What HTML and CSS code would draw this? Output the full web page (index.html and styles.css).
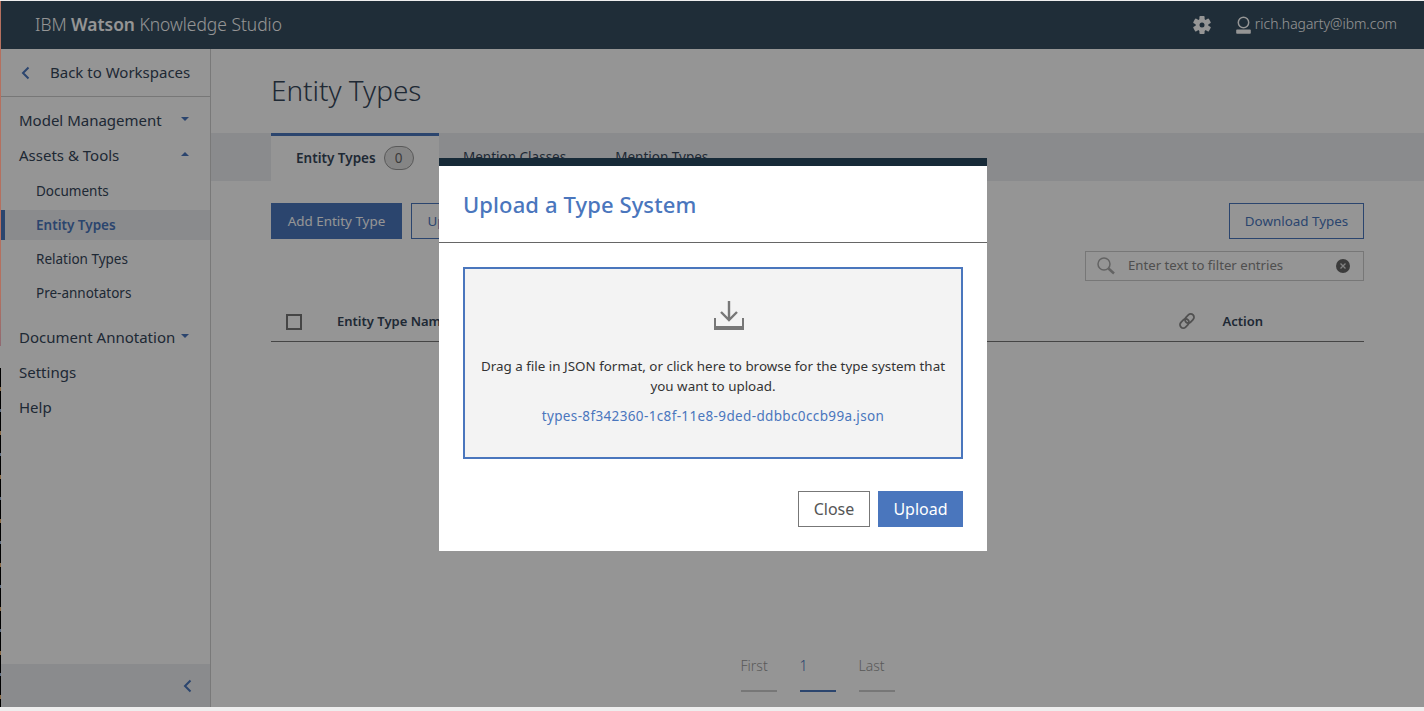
FILE: index.html
```html
<!DOCTYPE html>
<html lang="en">
<head>
    <meta charset="UTF-8">
    <title>Entity Types - IBM Watson Knowledge Studio</title>
    <link rel="stylesheet" href="styles.css">
</head>
<body>
    <div class="edge"></div>
    <div class="edge-noise"></div>
    <div class="app">
        <header class="topbar">
            <div class="brand">IBM <b>Watson</b> Knowledge Studio</div>
            <div class="topbar-right">
                <svg class="gear" width="18" height="18" viewBox="0 0 18 18"><g fill="#fff"><circle cx="9" cy="9" r="6.300"/><rect x="6.400" y="0" width="5.200" height="18" rx="1"/><rect x="6.400" y="0" width="5.200" height="18" rx="1" transform="rotate(60 9 9)"/><rect x="6.400" y="0" width="5.200" height="18" rx="1" transform="rotate(120 9 9)"/></g><circle cx="9" cy="9" r="2.500" fill="#354d60"/></svg>
                <svg class="user" width="15" height="18" viewBox="0 0 15 18"><circle cx="7.500" cy="6.500" r="5.200" fill="none" stroke="#fff" stroke-width="1.500"/><path fill="#fff" d="M1 13.500h13a.8.8 0 0 1 .8.8V17a.8.8 0 0 1-.8.8H1a.8.8 0 0 1-.8-.8v-2.700a.8.8 0 0 1 .8-.8z"/></svg>
                <span class="email">rich.hagarty@ibm.com</span>
            </div>
        </header>
        <div class="body-row">
            <nav class="sidebar">
                <a class="back"><svg width="9" height="14" viewBox="0 0 9 14"><path d="M7.500 1.500 2 7l5.500 5.500" fill="none" stroke="#4a76bd" stroke-width="2"/></svg><span>Back to Workspaces</span></a>
                <div class="nav-list">
                    <div class="nav-head">Model Management <i class="caret down"></i></div>
                    <div class="nav-head">Assets &amp; Tools <i class="caret up"></i></div>
                    <div class="nav-sub first">Documents</div>
                    <div class="nav-sub active">Entity Types</div>
                    <div class="nav-sub">Relation Types</div>
                    <div class="nav-sub">Pre-annotators</div>
                    <div class="nav-head spaced">Document Annotation <i class="caret down"></i></div>
                    <div class="nav-head">Settings</div>
                    <div class="nav-head">Help</div>
                </div>
                <div class="collapse"><svg width="9" height="14" viewBox="0 0 9 14"><path d="M7.500 1.500 2 7l5.500 5.500" fill="none" stroke="#4a76bd" stroke-width="2"/></svg></div>
            </nav>
            <main class="content">
                <h1 class="page-title">Entity Types</h1>
                <div class="tabs">
                    <div class="tab active">Entity Types <span class="count">0</span></div>
                    <div class="tab">Mention Classes</div>
                    <div class="tab">Mention Types</div>
                </div>
                <div class="panel">
                    <div class="actions">
                        <button class="btn primary">Add Entity Type</button>
                        <button class="btn outline">Upload</button>
                        <button class="btn outline right">Download Types</button>
                    </div>
                    <div class="filter">
                        <svg width="20" height="20" viewBox="0 0 20 20"><circle cx="8" cy="8" r="6" fill="none" stroke="#aaa" stroke-width="1.500"/><path d="m12.500 12.500 5.500 5" stroke="#aaa" stroke-width="2.500" fill="none"/></svg>
                        <span class="filter-text">Enter text to filter entries</span>
                        <svg width="14" height="14" viewBox="0 0 14 14"><circle cx="7" cy="7" r="7" fill="#666"/><path d="m4.500 4.500 5 5m0-5-5 5" stroke="#ddd" stroke-width="1.300"/></svg>
                    </div>
                    <div class="table-head">
                        <span class="check"></span>
                        <span class="col-name">Entity Type Name</span>
                        <svg class="link" width="18" height="18" viewBox="0 0 18 18"><g fill="none" stroke="#8a8a8a" stroke-width="1.800"><rect x="1.500" y="8.200" width="10" height="6.600" rx="3.300" transform="rotate(-45 6.500 11.500)"/><rect x="6.500" y="3.200" width="10" height="6.600" rx="3.300" transform="rotate(-45 11.500 6.500)"/></g></svg>
                        <span class="col-action">Action</span>
                    </div>
                    <div class="pager">
                        <span class="page-item">First</span>
                        <span class="page-item current">1</span>
                        <span class="page-item">Last</span>
                    </div>
                </div>
            </main>
        </div>
    </div>

    <div class="overlay">
        <div class="modal">
            <h2 class="modal-title">Upload a Type System</h2>
            <div class="modal-body">
                <div class="dropzone">
                    <svg class="drop-icon" width="32" height="30" viewBox="0 0 32 30"><path d="M16 0v19M8 11l8 8 8-8" fill="none" stroke="#777" stroke-width="2.400"/><path fill="#777" d="M1 17h2v8h26v-8h2v12H1z"/></svg>
                    <p class="drop-text">Drag a file in JSON format, or click here to browse for the type system that you want to upload.</p>
                    <p class="file-name">types-8f342360-1c8f-11e8-9ded-ddbbc0ccb99a.json</p>
                </div>
                <div class="modal-actions">
                    <button class="btn close">Close</button>
                    <button class="btn upload">Upload</button>
                </div>
            </div>
        </div>
    </div>
</body>
</html>
```

FILE: styles.css
```css
* {
    box-sizing: border-box;
}

html, body {
    margin: 0;
    height: 711px;
    overflow: hidden;
}

body {
    font-family: "Noto Sans", Arial, sans-serif;
    background: #eeeeee;
    color: #35465a;
    position: relative;
}

.edge {
    position: absolute;
    left: 0;
    top: 1px;
    width: 1px;
    height: 367px;
    background: linear-gradient(#b5705f, #b5705f 80%, #8f6a72 94%, #959595 94%);
}

.edge-noise {
    position: absolute;
    left: 0;
    top: 368px;
    width: 1px;
    height: 339px;
    background: repeating-linear-gradient(#000 0 19px, #8a6a45 19px 23px, #000 23px 41px, #5c6b80 41px 44px);
}

.app {
    height: 706px;
    margin-top: 1px;
    margin-left: 1px;
    display: flex;
    flex-direction: column;
    background: #fff;
}

.topbar {
    height: 48px;
    flex: none;
    background: #354d60;
    color: #fff;
    display: flex;
    align-items: center;
    justify-content: space-between;
    padding: 0 27px 0 34px;
}

.brand {
    font-size: 17.400px;
    font-weight: 300;
    padding-bottom: 3px;
}

.brand b {
    font-weight: 600;
}

.topbar-right {
    display: flex;
    align-items: center;
    font-size: 13.900px;
    font-weight: 300;
}

.email {
    padding-bottom: 3px;
}

.gear {
    margin-right: 25px;
}

.user {
    margin-right: 4px;
}

.body-row {
    flex: 1;
    display: flex;
    min-height: 0;
}

.sidebar {
    width: 210px;
    flex: none;
    border-right: 1px solid #d0d0d0;
    display: flex;
    flex-direction: column;
}

.back {
    height: 48px;
    border-bottom: 1px solid #ccc;
    display: flex;
    align-items: center;
    padding-left: 20px;
    font-size: 15px;
    flex: none;
}

.back span {
    margin-left: 20px;
    padding-bottom: 2px;
}

.nav-list {
    flex: 1;
    padding-top: 5px;
}

.nav-head {
    height: 35px;
    display: flex;
    align-items: center;
    padding-left: 18px;
    font-size: 15px;
    position: relative;
}

.nav-head.spaced {
    margin-top: 11px;
}

.caret {
    position: absolute;
    left: 180px;
    top: 15px;
    border-left: 4px solid transparent;
    border-right: 4px solid transparent;
}

.caret.down {
    border-top: 4px solid #4a76bd;
}

.caret.up {
    border-bottom: 4px solid #4a76bd;
}

.nav-sub {
    height: 30px;
    margin-bottom: 4px;
    display: flex;
    align-items: center;
    padding-left: 35px;
    font-size: 13.500px;
}

.nav-sub.first {
    margin-top: 4px;
}

.nav-sub.active {
    background: #eceef2;
    color: #4a76bd;
    font-weight: 600;
    border-left: 4px solid #4a76bd;
    padding-left: 31px;
}

.collapse {
    height: 43px;
    flex: none;
    background: #eceef2;
    display: flex;
    align-items: center;
    justify-content: flex-end;
    padding-right: 18px;
}

.content {
    flex: 1;
    min-width: 0;
    display: flex;
    flex-direction: column;
}

.page-title {
    margin: 0;
    height: 84px;
    padding: 22px 0 0 60px;
    font-size: 27.900px;
    font-weight: 300;
    line-height: 38px;
}

.tabs {
    height: 48px;
    flex: none;
    background: #eceef2;
    display: flex;
    padding-left: 60px;
}

.tab {
    height: 48px;
    padding: 0 24px;
    font-size: 13.500px;
    display: flex;
    align-items: center;
    color: #35465a;
}

.tab.active {
    width: 168px;
    padding-left: 25px;
    background: #fff;
    border-top: 3px solid #4a76bd;
    font-weight: 600;
    padding-bottom: 1px;
}

.tab.active + .tab + .tab {
    margin-left: 1px;
}

.count {
    width: 30px;
    height: 24px;
    margin-left: 8px;
    border: 1px solid #999;
    border-radius: 12px;
    background: #e4e4e4;
    font-weight: 400;
    color: #666;
    display: flex;
    align-items: center;
    justify-content: center;
}

.panel {
    flex: 1;
    padding: 22px 60px 0;
    display: flex;
    flex-direction: column;
}

.actions {
    display: flex;
    gap: 9px;
}

.btn {
    font-family: inherit;
    font-size: 13.400px;
    height: 36px;
    padding: 0 15.500px;
    border: 1px solid #4a76bd;
    background: #fff;
    color: #4a76bd;
}

.btn.primary {
    width: 131px;
    padding: 0;
    background: #4a76bd;
    color: #fff;
}

.btn.right {
    width: 135px;
    padding: 0;
    margin-left: auto;
}

.filter {
    align-self: flex-end;
    width: 279px;
    height: 30px;
    margin-top: 12px;
    border: 1px solid #ccc;
    display: flex;
    align-items: center;
    padding: 0 13px 0 10px;
    font-size: 13.200px;
    color: #888;
}

.filter-text {
    flex: 1;
    margin-left: 12px;
    padding-bottom: 2px;
}

.table-head {
    height: 50px;
    margin-top: 11px;
    padding-top: 8px;
    border-bottom: 1px solid #777;
    display: flex;
    align-items: center;
    font-size: 13px;
    font-weight: 600;
}

.check {
    width: 16px;
    height: 16px;
    margin-left: 15px;
    border: 2px solid #777;
    position: relative;
    top: 1px;
}

.col-name {
    margin-left: 35px;
}

.link {
    margin-left: auto;
    margin-right: 26px;
}

.col-action {
    margin-right: 101px;
}

.pager {
    margin-top: auto;
    margin-bottom: 15px;
    display: flex;
    justify-content: center;
    gap: 23px;
}

.page-item {
    width: 36px;
    padding-bottom: 15px;
    border-bottom: 2px solid #ccc;
    font-size: 14px;
    font-weight: 300;
    color: #999;
}

.page-item.current {
    color: #4a76bd;
    border-bottom-color: #4a76bd;
}

.overlay {
    position: fixed;
    inset: 1px 0 0 1px;
    height: 706px;
    background: rgba(0, 0, 0, 0.415);
}

.modal {
    position: absolute;
    left: 438px;
    top: 157px;
    width: 548px;
    height: 393px;
    background: #fff;
    border-top: 8px solid #172a38;
}

.modal-title {
    margin: 0;
    height: 77px;
    padding: 0 24px;
    border-bottom: 1px solid #666;
    font-size: 22px;
    font-weight: 500;
    letter-spacing: 0.1px;
    line-height: 76px;
    color: #4a76bd;
}

.modal-body {
    padding: 24px;
}

.dropzone {
    height: 192px;
    border: 2px solid #4a76bd;
    background: #f3f3f3;
    display: flex;
    flex-direction: column;
    align-items: center;
    padding-top: 32px;
    text-align: center;
}

.drop-icon {
    margin-left: 32px;
}

.drop-text {
    margin: 25px 0 0;
    padding: 0 12px;
    font-size: 13.400px;
    line-height: 20px;
    color: #333;
}

.file-name {
    margin: 11px 0 0;
    font-size: 13.500px;
    letter-spacing: 0.36px;
    color: #4a76bd;
}

.modal-actions {
    margin-top: 32px;
    display: flex;
    justify-content: flex-end;
    gap: 8px;
}

.btn.close {
    width: 72px;
    padding: 0;
    border-color: #777;
    color: #555;
    font-size: 16px;
}

.btn.upload {
    width: 85px;
    padding: 0;
    background: #4a76bd;
    color: #fff;
    font-size: 16px;
}
```
